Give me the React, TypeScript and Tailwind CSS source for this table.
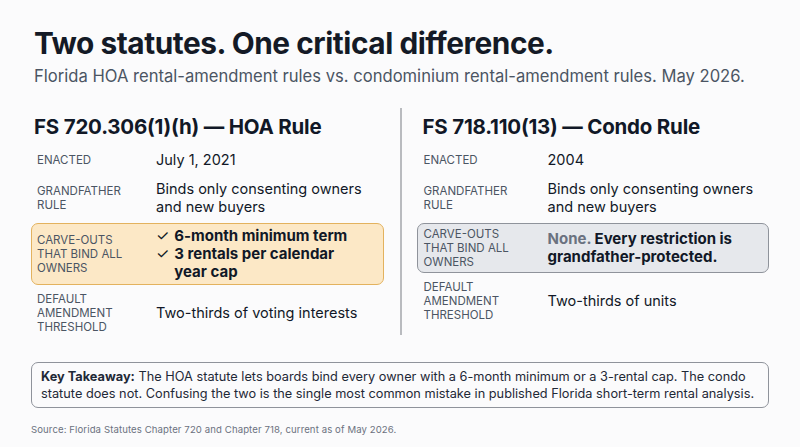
import type { ReactNode } from 'react';

interface Row {
  label: string[];
  value: ReactNode;
  tone?: 'amber' | 'gray';
  gap: string;
}

function Lines({ lines }: { lines: string[] }) {
  return (
    <>
      {lines.map((l) => (
        <div key={l} className="whitespace-nowrap">
          {l}
        </div>
      ))}
    </>
  );
}

const hoaRows: Row[] = [
  { label: ['Enacted'], value: <Lines lines={['July 1, 2021']} />, gap: 'mt-[11px]' },
  { label: ['Grandfather', 'rule'], value: <Lines lines={['Binds only consenting owners', 'and new buyers']} />, gap: 'mt-[9px]' },
  {
    label: ['Carve-outs', 'that bind all', 'owners'],
    tone: 'amber',
    gap: 'mt-[6px]',
    value: (
      <ul className="text-[15px] font-bold">
        <li className="flex gap-[5px] whitespace-nowrap">
          <span className="font-normal">✓</span>
          <span>6-month minimum term</span>
        </li>
        <li className="flex gap-[5px]">
          <span className="font-normal">✓</span>
          <span>
            3 rentals per calendar
            <br />
            year cap
          </span>
        </li>
      </ul>
    ),
  },
  { label: ['Default', 'amendment', 'threshold'], value: <Lines lines={['Two-thirds of voting interests']} />, gap: 'mt-[6px]' },
];

const condoRows: Row[] = [
  { label: ['Enacted'], value: <Lines lines={['2004']} />, gap: 'mt-[11px]' },
  { label: ['Grandfather', 'rule'], value: <Lines lines={['Binds only consenting owners', 'and new buyers']} />, gap: 'mt-[9px]' },
  {
    label: ['Carve-outs', 'that bind all', 'owners'],
    tone: 'gray',
    gap: 'mt-[6px]',
    value: (
      <div className="text-[15px] font-bold">
        <div className="whitespace-nowrap">
          <span className="text-[#6b7280]">None.</span> Every restriction is
        </div>
        <div className="whitespace-nowrap">grandfather-protected.</div>
      </div>
    ),
  },
  { label: ['Default', 'amendment', 'threshold'], value: <Lines lines={['Two-thirds of units']} />, gap: 'mt-[6px]' },
];

function RuleRow({ row, labelW }: { row: Row; labelW: string }) {
  const box =
    row.tone === 'amber'
      ? 'rounded-[7px] border border-[#e3b25e] bg-[#fce8c6] py-[3px]'
      : row.tone === 'gray'
        ? 'rounded-[7px] border border-[#8f939b] bg-[#e6e8ec] py-[3px]'
        : 'border border-transparent';
  return (
    <div className={`${row.gap} flex items-center ${box}`}>
      <div className={`${labelW} shrink-0 text-[11.5px] uppercase leading-[14px] text-[#4b5563]`}>
        {row.label.map((l) => (
          <div key={l}>{l}</div>
        ))}
      </div>
      <div className="text-[14.5px] leading-[18px] text-[#111827]">{row.value}</div>
    </div>
  );
}

function Column({ title, rows, labelW, titlePad }: { title: string; rows: Row[]; labelW: string; titlePad: string }) {
  return (
    <section className="flex w-[353px] flex-col">
      <h2 className={`mt-[7px] ${titlePad} text-[20.5px] font-bold leading-[24px] tracking-[-0.01em] text-[#111827]`}>{title}</h2>
      {rows.map((r) => (
        <RuleRow key={r.label.join()} row={r} labelW={labelW} />
      ))}
    </section>
  );
}

export default function App() {
  return (
    <div className="h-[447px] w-[800px] bg-[#fbfbfc] px-[31px] pt-[25px] font-['Inter',sans-serif] text-[#111827]">
      <h1 className="pl-[3px] text-[29.8px] font-bold leading-[36px] tracking-[-0.015em] text-[#141a26]">
        Two statutes. One critical difference.
      </h1>
      <p className="mt-[5px] pl-[3px] text-[16.6px] leading-[20px] text-[#4b5563]">
        Florida HOA rental-amendment rules vs. condominium rental-amendment rules. May 2026.
      </p>

      <div className="mt-[22px] flex gap-[15px] pb-[6px]">
        <Column title="FS 720.306(1)(h) — HOA Rule" rows={hoaRows} labelW="w-[124px] pl-[5px]" titlePad="pl-[3px]" />
        <div className="ml-px w-[2px] shrink-0 self-stretch bg-[#b9bbbf]" />
        <Column title="FS 718.110(13) — Condo Rule" rows={condoRows} labelW="w-[130px] pl-[6px]" titlePad="pl-[6px]" />
      </div>

      <div className="mt-[21px] rounded-[7px] border border-[#8f939b] px-[9px] py-[5px] text-[12.75px] leading-[17px] text-[#1f2937]">
        <div className="whitespace-nowrap">
          <span className="font-bold">Key Takeaway:</span> The HOA statute lets boards bind every owner with a 6-month
          minimum or a 3-rental cap. The condo
        </div>
        <div className="whitespace-nowrap">
          statute does not. Confusing the two is the single most common mistake in published Florida short-term rental
          analysis.
        </div>
      </div>

      <p className="mt-[16px] text-[9.6px] leading-[12px] tracking-[0.01em] text-[#6b7280]">
        Source: Florida Statutes Chapter 720 and Chapter 718, current as of May 2026.
      </p>
    </div>
  );
}
